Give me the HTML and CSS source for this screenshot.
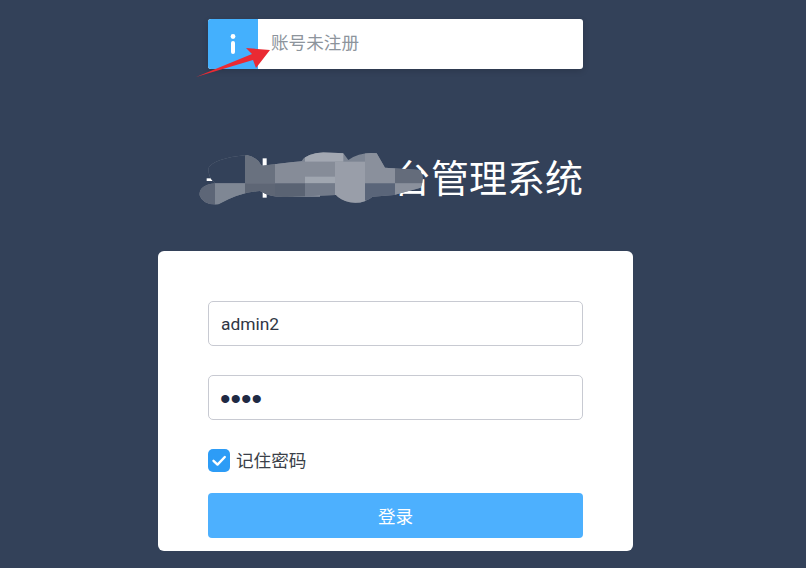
FILE: index.html
```html
<!DOCTYPE html>
<html lang="zh-CN">
<head>
<meta charset="utf-8">
<title>管理系统</title>
<link rel="stylesheet" href="styles.css">
</head>
<body>
<main class="page">
  <div class="notice">
    <div class="notice-icon"><svg viewBox="0 0 10 24" width="10" height="24"><circle cx="5" cy="4.5" r="2.4" fill="#fff"/><rect x="3" y="9" width="4" height="13" rx="2" fill="#fff"/></svg></div>
    <div class="notice-text">账号未注册</div>
  </div>
  <h1 class="title">台管理系统</h1>
  <form class="card">
    <input class="field" type="text" value="admin2">
    <input class="field field-pass" type="password" value="1234">
    <label class="remember">
      <span class="check"><svg viewBox="0 0 22 23" width="22" height="23"><path d="M5.5 11.8 9.5 15.6 16.8 8" fill="none" stroke="#fff" stroke-width="2.4" stroke-linecap="round" stroke-linejoin="round"/></svg></span>
      <span class="remember-text">记住密码</span>
    </label>
    <button class="submit" type="button">登录</button>
  </form>
  <svg class="arrow" viewBox="0 0 90 50" width="90" height="50"><path d="M0 42 L56 19 L50 13 L74 15 L60 33 L57 25 Z" fill="#ea2a33"/></svg>
  <svg class="smudge" viewBox="0 0 1200 210" width="400" height="70">
    <defs>
      <clipPath id="blob"><path d="M55 70Q70 40 170 30Q200 35 215 62L335 48Q350 25 400 22L460 25L475 45Q510 20 560 25L585 68L690 75Q705 100 692 128L612 150L548 155Q520 178 480 172Q450 165 438 150L290 156Q240 158 210 138Q150 142 85 178Q40 182 28 150Q28 120 75 115Q55 100 55 70Z"/></clipPath>
    </defs>
    <rect x="50" y="100" width="25" height="8" fill="#fff"/>
    <rect x="218" y="40" width="12" height="118" fill="#fff"/>
    <rect x="310" y="146" width="80" height="8" fill="#fff"/>
    <g clip-path="url(#blob)">
      <rect x="20" y="20" width="700" height="170" fill="#7d8593"/>
      <rect x="20" y="20" width="150" height="95" fill="#334159"/>
      <rect x="20" y="115" width="55" height="70" fill="#5d6677"/>
      <rect x="75" y="115" width="95" height="70" fill="#7f8794"/>
      <rect x="165" y="20" width="90" height="95" fill="#69717f"/>
      <rect x="165" y="115" width="90" height="45" fill="#5e6675"/>
      <rect x="255" y="50" width="180" height="65" fill="#868c98"/>
      <rect x="255" y="115" width="90" height="45" fill="#5a6373"/>
      <rect x="345" y="20" width="115" height="30" fill="#a3a8b2"/>
      <rect x="345" y="95" width="90" height="20" fill="#a0a6b0"/>
      <rect x="345" y="115" width="90" height="45" fill="#737b8a"/>
      <rect x="435" y="50" width="90" height="130" fill="#999ea9"/>
      <rect x="525" y="20" width="90" height="95" fill="#8a909c"/>
      <rect x="525" y="115" width="90" height="50" fill="#5a6579"/>
      <rect x="615" y="70" width="90" height="45" fill="#646c7b"/>
      <rect x="615" y="115" width="90" height="40" fill="#8a909c"/>
    </g>
  </svg>
</main>
</body>
</html>
```

FILE: styles.css
```css
html, body {
  margin: 0;
  height: 100%;
  background: #334159;
  overflow: hidden;
}
body {
  font-family: "Noto Sans CJK SC", "Noto Sans", sans-serif;
}
.page {
  position: relative;
  width: 806px;
  height: 568px;
  display: flex;
  flex-direction: column;
  box-sizing: border-box;
  padding-top: 19px;
}
.notice {
  width: 375px;
  height: 50px;
  margin-left: 208px;
  display: flex;
  background: #fff;
  border-radius: 3px;
  overflow: hidden;
  box-shadow: 0 2px 6px rgba(0, 0, 0, .15);
}
.notice-icon {
  width: 50px;
  background: #44b0fd;
  display: flex;
  align-items: center;
  justify-content: center;
}
.notice-text {
  margin-left: 13px;
  color: #8d949c;
  font-size: 17.6px;
  line-height: 46px;
}
.title {
  width: 375px;
  margin: 82px 0 0 208px;
  height: 50px;
  text-align: right;
  color: #fff;
  font-size: 38px;
  font-weight: 400;
  line-height: 50px;
}
.card {
  width: 475px;
  height: 300px;
  margin: 50px 0 0 158px;
  box-sizing: border-box;
  padding: 50px 50px 0;
  background: #fff;
  border-radius: 6px;
  display: flex;
  flex-direction: column;
}
.field {
  box-sizing: border-box;
  width: 375px;
  height: 45px;
  flex: none;
  padding: 0 12px;
  border: 1px solid #c8cad2;
  border-radius: 5px;
  color: #2f3644;
  font: 17.4px Roboto, sans-serif;
  margin-bottom: 29px;
  outline: none;
}
.field-pass {
  color: #1f2a44;
  font: 30px "Liberation Sans", sans-serif;
  padding: 2px 0 0 11px;
}
.remember {
  display: flex;
  align-items: center;
  gap: 6px;
  height: 23px;
  color: #3a3f48;
  font-size: 17.6px;
}
.remember-text {
  display: block;
  height: 25px;
  line-height: 23px;
}
.check {
  width: 22px;
  height: 23px;
  border-radius: 5px;
  background: #2d9cf6;
  display: block;
}
.check svg {
  display: block;
}
.submit {
  width: 375px;
  height: 45px;
  margin-top: 21px;
  border: 0;
  border-radius: 4px;
  background: #4db0fe;
  color: #fff;
  font-family: inherit;
  font-size: 17.6px;
}
.arrow {
  position: absolute;
  left: 196px;
  top: 35px;
}
.smudge {
  position: absolute;
  left: 190px;
  top: 145px;
}
```
